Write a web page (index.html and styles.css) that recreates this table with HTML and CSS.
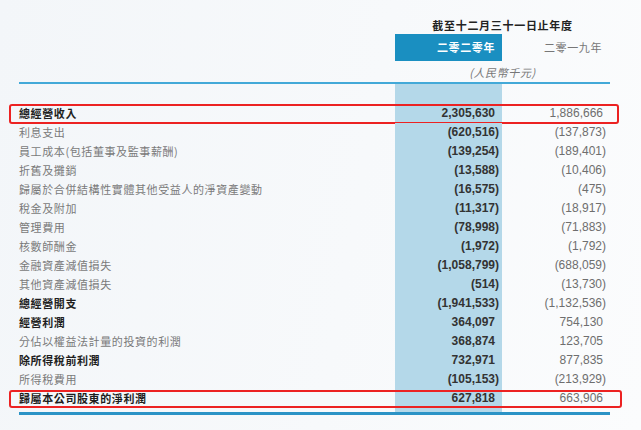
FILE: index.html
```html
<!DOCTYPE html>
<html lang="zh-Hant">
<head>
<meta charset="utf-8">
<link rel="stylesheet" href="styles.css">
</head>
<body>
<main class="sheet">
  <div class="row title-row"><div></div><div class="span2 title">截至十二月三十一日止年度</div></div>
  <div class="row year-row"><div></div><div class="year cur-year">二零二零年</div><div class="year prev-year">二零一九年</div></div>
  <div class="row unit-row"><div></div><div class="span2 unit">(人民幣千元)</div></div>
  <div class="rule-top"></div>
  <div class="row gap-row"><div></div><div class="cur-bg"></div><div></div></div>

  <div class="row data strong boxed box1"><div class="label">總經營收入</div><div class="cur np">2,305,630</div><div class="prev np">1,886,666</div></div>
  <div class="row data"><div class="label">利息支出</div><div class="cur">(620,516)</div><div class="prev">(137,873)</div></div>
  <div class="row data"><div class="label">員工成本(包括董事及監事薪酬)</div><div class="cur">(139,254)</div><div class="prev">(189,401)</div></div>
  <div class="row data"><div class="label">折舊及攤銷</div><div class="cur">(13,588)</div><div class="prev">(10,406)</div></div>
  <div class="row data"><div class="label">歸屬於合併結構性實體其他受益人的淨資產變動</div><div class="cur">(16,575)</div><div class="prev">(475)</div></div>
  <div class="row data"><div class="label">稅金及附加</div><div class="cur">(11,317)</div><div class="prev">(18,917)</div></div>
  <div class="row data"><div class="label">管理費用</div><div class="cur">(78,998)</div><div class="prev">(71,883)</div></div>
  <div class="row data"><div class="label">核數師酬金</div><div class="cur">(1,972)</div><div class="prev">(1,792)</div></div>
  <div class="row data"><div class="label">金融資產減值損失</div><div class="cur">(1,058,799)</div><div class="prev">(688,059)</div></div>
  <div class="row data"><div class="label">其他資產減值損失</div><div class="cur">(514)</div><div class="prev">(13,730)</div></div>
  <div class="row data strong"><div class="label">總經營開支</div><div class="cur">(1,941,533)</div><div class="prev">(1,132,536)</div></div>
  <div class="row data strong"><div class="label">經營利潤</div><div class="cur np">364,097</div><div class="prev np">754,130</div></div>
  <div class="row data"><div class="label">分佔以權益法計量的投資的利潤</div><div class="cur np">368,874</div><div class="prev np">123,705</div></div>
  <div class="row data strong"><div class="label">除所得稅前利潤</div><div class="cur np">732,971</div><div class="prev np">877,835</div></div>
  <div class="row data"><div class="label">所得稅費用</div><div class="cur">(105,153)</div><div class="prev">(213,929)</div></div>
  <div class="row data strong boxed box2"><div class="label">歸屬本公司股東的淨利潤</div><div class="cur np">627,818</div><div class="prev np">663,906</div></div>

  <div class="row end-row"><div></div><div class="cur-bg"></div><div></div></div>
  <div class="rule-bottom"></div>
</main>
</body>
</html>
```
FILE: styles.css
```css
html, body {
  margin: 0;
  padding: 0;
}
body {
  width: 641px;
  height: 430px;
  overflow: hidden;
  background: linear-gradient(100deg, #f3f6f9 0%, #f7f9fb 55%, #fbfcfd 100%);
  font-family: "Noto Sans CJK TC", "Liberation Sans", sans-serif;
}
.sheet {
  margin-left: 19px;
  padding-top: 16px;
  width: 591px;
}
.row {
  display: grid;
  grid-template-columns: 376px 107px 108px;
}
.span2 {
  grid-column: 2 / 4;
  text-align: center;
}
.title-row { height: 18px; }
.title {
  font-size: 11px;
  font-weight: 700;
  letter-spacing: 0.7px;
  line-height: 18px;
  color: #222;
}
.year-row { height: 25px; }
.year {
  font-size: 11px;
  letter-spacing: 0.6px;
  line-height: 27px;
  text-align: right;
}
.cur-year {
  background: #1a8fc1;
  color: #fff;
  font-weight: 700;
  padding-right: 7px;
}
.prev-year {
  color: #777;
  padding-right: 8px;
}
.unit-row { height: 23px; }
.unit {
  font-size: 11px;
  font-style: italic;
  letter-spacing: 0.6px;
  color: #777;
  line-height: 20px;
  padding-top: 3px;
}
.rule-top {
  height: 2px;
  background: #43a9d8;
}
.gap-row { height: 20px; }
.end-row { height: 4px; }
.cur-bg { background: #b4d8e9; }

.data {
  height: 19px;
  line-height: 19px;
  position: relative;
}
.label {
  font-size: 11px;
  letter-spacing: 0.6px;
  color: #7a7a7a;
  white-space: nowrap;
}
.cur, .prev {
  font-family: "Liberation Sans", Arial, sans-serif;
  font-size: 12px;
  text-align: right;
  white-space: nowrap;
}
.cur {
  background: #b4d8e9;
  font-weight: 700;
  color: #333;
  padding-right: 3px;
}
.cur.np { padding-right: 7px; }
.prev {
  color: #6e6e6e;
  padding-right: 4px;
}
.prev.np { padding-right: 7px; }

.strong .label {
  font-weight: 700;
  color: #1e1e1e;
}

.boxed::after {
  content: "";
  position: absolute;
  top: 0;
  bottom: -1px;
  left: -10px;
  right: -9px;
  border: 2px solid #ec2222;
  border-radius: 3px;
  pointer-events: none;
}
.box2::after {
  top: 1px;
  bottom: 0;
  right: -12px;
}

.rule-bottom {
  height: 3px;
  background: #2b93c6;
}
```
